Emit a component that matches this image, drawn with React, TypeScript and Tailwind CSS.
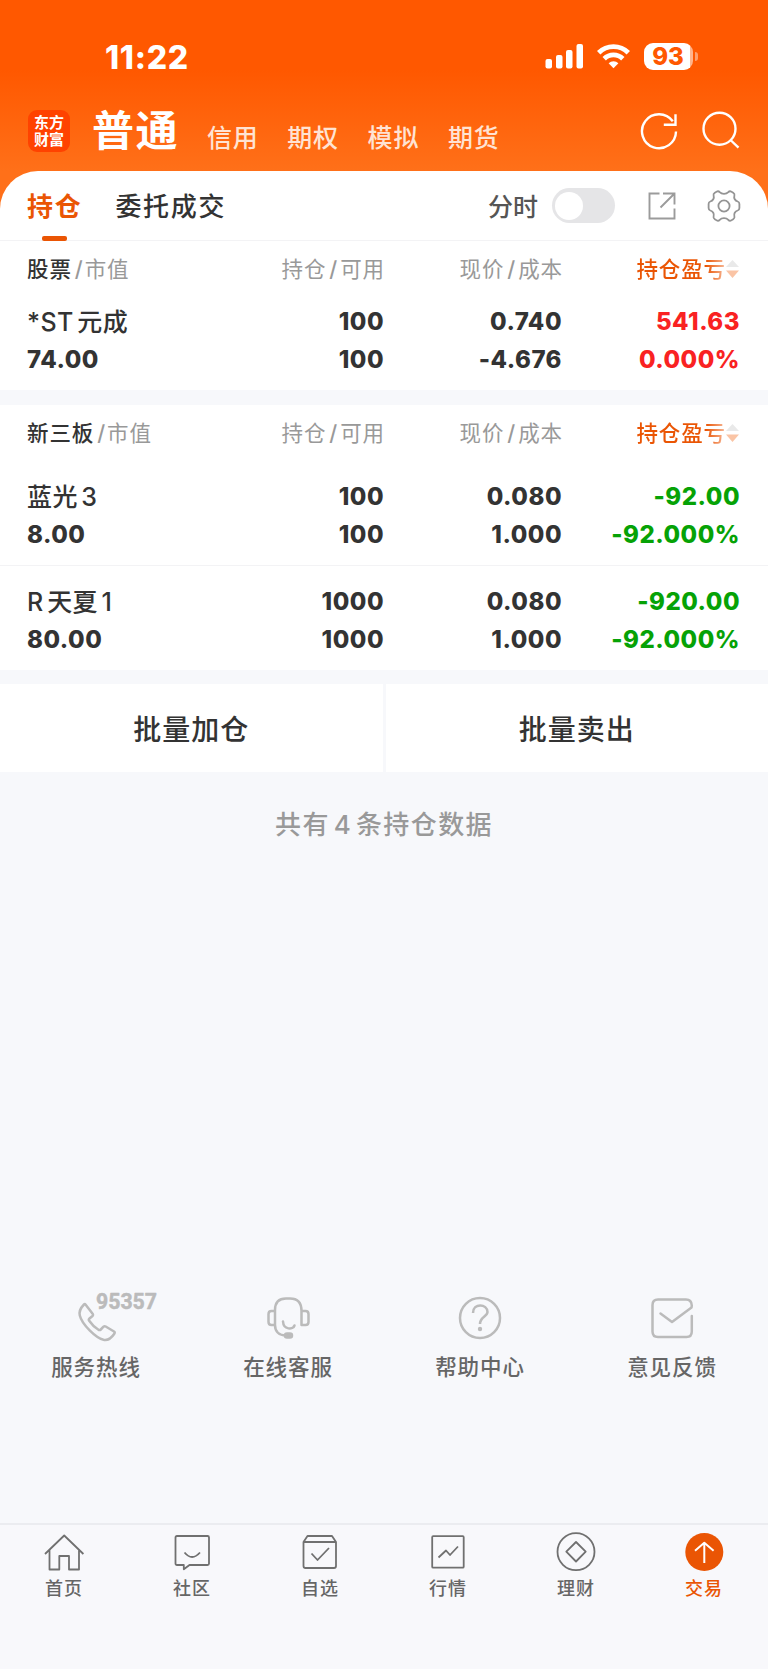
import type { ReactNode } from 'react';

type Holding = {
  name: string;
  value: string;
  amount: string;
  available: string;
  price: string;
  cost: string;
  profit: string;
  rate: string;
  up?: boolean;
};

const stocks: Holding[] = [
  { name: '*ST 元成', value: '74.00', amount: '100', available: '100', price: '0.740', cost: '-4.676', profit: '541.63', rate: '0.000%', up: true },
];

const otc: Holding[] = [
  { name: '蓝光 3', value: '8.00', amount: '100', available: '100', price: '0.080', cost: '1.000', profit: '-92.00', rate: '-92.000%' },
  { name: 'R 天夏 1', value: '80.00', amount: '1000', available: '1000', price: '0.080', cost: '1.000', profit: '-920.00', rate: '-92.000%' },
];

function StatusBar() {
  return (
    <div className="flex h-[92px] items-end justify-between pl-[105px] pr-[70px] text-white">
      <span className="h-[54px] text-[32px] font-extrabold leading-[39px] tracking-[0.7px]">11:22</span>
      <div className="flex h-[54px] items-start pt-[5px]">
        <svg width="40" height="28" viewBox="0 0 40 28" fill="white" className="mr-[11px]">
          <rect x="0.5" y="16" width="6.5" height="9.5" rx="2" />
          <rect x="11" y="12" width="6.5" height="13.5" rx="2" />
          <rect x="21" y="7" width="6.5" height="18.5" rx="2" />
          <rect x="31.5" y="1" width="6.5" height="24.5" rx="2" />
        </svg>
        <svg width="36" height="28" viewBox="0 0 36 28" className="mr-[12px]" fill="none" stroke="white" strokeWidth="4.8">
          <path d="M2.7 9.8a21 21 0 0 1 29.600 0" />
          <path d="M8.2 15.7a13.200 13.200 0 0 1 18.600 0" />
          <path d="M17.500 25.200l-4.900-5a7 7 0 0 1 9.800 0z" fill="white" stroke="none" />
        </svg>
        <div className="flex items-center">
          <div className="flex h-[27px] w-[49px] items-center justify-center rounded-[9px] bg-[linear-gradient(to_right,white_46px,#ffb48c_46px)] pr-[1px] text-[24px] font-extrabold leading-[27px] text-[#ff5800]">
            93
          </div>
          <div className="ml-[2px] h-[9px] w-[3px] rounded-r-full bg-[#ff9e6b]" />
        </div>
      </div>
    </div>
  );
}

function Header() {
  return (
    <div className="flex h-[79px] items-start px-[28px] text-white">
      <div className="mt-[18px] flex h-[42px] w-[42px] flex-col items-center justify-center rounded-[9px] bg-[#ff4200] text-[15px] font-bold leading-[17px]">
        <span>东方</span>
        <span>财富</span>
      </div>
      <span className="ml-[22px] mt-[8px] w-[115px] text-[42px] font-bold leading-[62px] tracking-[1.5px]">普通</span>
      {['信用', '期权', '模拟', '期货'].map((t) => (
        <span key={t} className="mt-[27px] w-[80.3px] text-[25px] font-medium leading-[38px] tracking-[0.8px] text-[#ffe3d3]">
          {t}
        </span>
      ))}
      <div className="ml-auto mt-[18px] flex gap-[22px]">
        <svg width="40" height="40" viewBox="0 0 40 40" fill="none" stroke="white" strokeWidth="2.4">
          <path d="M36 21.500A17 17 0 1 1 32.800 11.300M35.500 4.300V14.800H23.800" />
        </svg>
        <svg width="38" height="40" viewBox="0 0 38 40" fill="none" stroke="white" strokeWidth="2.4">
          <circle cx="17.5" cy="18.700" r="16" />
          <path d="M28.500 30L36.500 37.700" />
        </svg>
      </div>
    </div>
  );
}

function Tabs() {
  return (
    <div className="flex h-[70px] items-center border-b border-[#f3f3f5] pl-[27px] pr-[27px]">
      <div className="relative flex h-full items-center">
        <span className="pt-[2px] text-[26px] font-bold leading-[40px] tracking-[1.7px] text-[#ea5504]">持仓</span>
        <div className="absolute bottom-[-1px] left-[15px] h-[5px] w-[25px] rounded-[2px] bg-[#ea5504]" />
      </div>
      <span className="ml-[33px] pt-[2px] text-[26px] font-medium leading-[40px] tracking-[1.7px] text-[#333]">委托成交</span>
      <span className="ml-auto pt-[2px] text-[25px] font-medium leading-[40px] text-[#555]">分时</span>
      <div className="ml-[14px] flex h-[35px] w-[63px] items-center rounded-full bg-[#e5e5e7] px-[3px]">
        <div className="h-[28px] w-[28px] rounded-full bg-white" />
      </div>
      <svg width="28" height="28" viewBox="0 0 28 28" className="ml-[33px]" fill="none" stroke="#9b9b9b" strokeWidth="1.9">
        <path d="M11.500 1.500H1.500V26.500H26.500V16.500M15 1.500H26.500V12.500M26 2L12.500 15.500" />
      </svg>
      <svg width="34" height="34" viewBox="0 0 34 34" className="ml-[31px]" fill="none" stroke="#949494" strokeWidth="1.8" strokeLinejoin="round">
        <circle cx="17" cy="17" r="5.6" />
        <path d="M12.700 3.200C13.700 4.300 15 4.900 17 4.900S20.300 4.300 21.300 3.200C22.300 2 23.200 2 24.500 2.700L26.200 3.700C27.500 4.500 27.800 5.300 27.400 6.600C26.600 9.300 28 11.800 30.700 12.500C32 12.900 32.400 13.600 32.400 15V19C32.400 20.400 32 21.100 30.700 21.500C28 22.200 26.600 24.700 27.400 27.400C27.800 28.700 27.500 29.500 26.200 30.300L24.500 31.300C23.200 32 22.300 32 21.300 30.800C20.300 29.700 19 29.100 17 29.100S13.700 29.700 12.700 30.800C11.700 32 10.800 32 9.500 31.300L7.800 30.300C6.500 29.500 6.200 28.700 6.600 27.400C7.400 24.700 6 22.200 3.300 21.500C2 21.100 1.600 20.400 1.600 19V15C1.600 13.600 2 12.900 3.300 12.500C6 11.800 7.400 9.300 6.600 6.600C6.200 5.300 6.500 4.500 7.800 3.700L9.500 2.700C10.800 2 11.700 2 12.700 3.200Z" />
      </svg>
    </div>
  );
}

function ColumnHeader({ title }: { title: string }) {
  return (
    <div className="grid h-[58px] grid-cols-[206px_150px_178px_178px] items-center px-[27px] pb-[2px] text-[21.5px] leading-[32px] tracking-[0.9px] text-[#999]">
      <div className="whitespace-nowrap">
        <span className="font-medium text-[#333]">{title}</span>
        <span className="ml-[3px] mr-[1px] font-medium">/</span>市值
      </div>
      <div className="-mr-[2px] text-right">
        持仓<span className="ml-[3px] mr-[2px] font-medium">/</span>可用
      </div>
      <div className="-mr-[2px] text-right">
        现价<span className="ml-[3px] mr-[2px] font-medium">/</span>成本
      </div>
      <div className="flex items-center justify-end font-medium">
        <span className="bg-[linear-gradient(to_right,#ea5504_70px,#f7bd9f)] bg-clip-text text-transparent">持仓盈亏</span>
        <svg width="13" height="18" viewBox="0 0 13 18">
          <path d="M6.500 0L13 7H0Z" fill="#e9e9e9" />
          <path d="M0 10.500H13L6.500 18Z" fill="#fac4a5" />
        </svg>
      </div>
    </div>
  );
}

function HoldingRow({ item, className }: { item: Holding; className: string }) {
  const color = item.up ? 'text-[#f92222]' : 'text-[#06a206]';
  return (
    <div className={`grid grid-cols-[206px_150px_178px_178px] px-[27px] pb-[11px] text-[24px] font-extrabold leading-[38px] tracking-[0.5px] text-[#333] ${className}`}>
      <div>
        <div className="whitespace-nowrap text-[25px] font-medium tracking-[0.4px] [word-spacing:-3.5px]">{item.name}</div>
        <div>{item.value}</div>
      </div>
      <div className="-mr-[1px] text-right">
        <div>{item.amount}</div>
        <div>{item.available}</div>
      </div>
      <div className="-mr-[1px] text-right">
        <div>{item.price}</div>
        <div>{item.cost}</div>
      </div>
      <div className={`-mr-[1px] text-right ${color}`}>
        <div>{item.profit}</div>
        <div>{item.rate}</div>
      </div>
    </div>
  );
}

function Service({ label, children }: { label: string; children: ReactNode }) {
  return (
    <div className="flex flex-1 flex-col items-center">
      <svg width="192" height="60" viewBox="0 0 192 60" fill="none" stroke="#bbb" strokeWidth="2.5" strokeLinecap="round" strokeLinejoin="round">
        {children}
      </svg>
      <span className="mt-[3px] text-[21.5px] font-medium leading-[32px] tracking-[0.9px] text-[#666]">{label}</span>
    </div>
  );
}

function Services() {
  return (
    <div className="mt-[412px] flex h-[235px]">
      <Service label="服务热线">
        <path d="M85.500 16.500L92.800 26Q93.500 27 92.500 28L89.500 30.500Q88.300 31.600 89.200 32.800Q93 38.500 98.500 41.800Q99.800 42.500 100.800 41.500L103.500 38.700Q104.500 37.800 105.700 38.500L114 43.500Q115.200 44.400 114.300 45.700Q109.500 53 103.500 51.800C96 50 82 36.500 79.800 27.500Q78.500 22 84 16.500Q84.800 15.700 85.500 16.500Z" />
        <text x="96" y="21" fill="#bbb" stroke="#bbb" strokeWidth="0.5" fontFamily="Roboto" fontSize="22.5" fontWeight="700" textLength="61" lengthAdjust="spacingAndGlyphs">
          95357
        </text>
      </Service>
      <Service label="在线客服">
        <path d="M109.500 37V23Q109.500 10.500 98 10.500H94Q83 10.500 83 22V37C83 43.500 87 47.500 94 47.500M83 23H79.500Q76.500 23 76.500 26V34Q76.500 37 79.500 37H83M109.500 23H113.500Q116.500 23 116.500 26V34Q116.500 37 113.500 37H109.500M91 33.500C91.500 42 101 42 102.500 37.500" />
        <rect x="93" y="45.500" width="7" height="4" rx="2" fill="#bbb" />
      </Service>
      <Service label="帮助中心">
        <circle cx="96" cy="30" r="20" />
        <path d="M89 25C89 14.500 103.500 15.500 103.500 24C103.500 28.500 96 29 96 36" strokeLinecap="butt" />
        <circle cx="96" cy="41" r="2.2" fill="#bbb" stroke="none" />
      </Service>
      <Service label="意见反馈">
        <path d="M115.800 28V43.500Q115.800 49 110.500 49H82Q76.500 49 76.500 43.500V17Q76.500 11.500 82 11.500H110Q115.500 11.500 115.800 17.500L115.500 19.500L96 34L84.500 25.500" />
      </Service>
    </div>
  );
}

function NavItem({ label, active, children }: { label: string; active?: boolean; children: ReactNode }) {
  return (
    <div className="flex w-32 flex-col items-center">
      <svg width="44" height="44" viewBox="0 0 44 44" className="mt-[6px]" fill="none" stroke="#707070" strokeWidth="1.8" strokeLinejoin="round">
        {children}
      </svg>
      <span className={`text-[18px] font-medium leading-[28px] tracking-[1px] ${active ? 'text-[#ea5504]' : 'text-[#666]'}`}>{label}</span>
    </div>
  );
}

function BottomNav() {
  return (
    <div className="flex h-[146px] border-t-2 border-[#ebecf0] bg-[#f8f8fb]">
      <NavItem label="首页">
        <path d="M3 23L22.200 4.500L41.400 23M7.500 19V38.500H17.300V25H27V38.500H37V19" />
      </NavItem>
      <NavItem label="社区">
        <path d="M7 5H37.500Q39 5 39 6.500V32.500Q39 34 37.500 34H19.500L13.800 38.300V34H7Q5.500 34 5.500 32.500V6.500Q5.500 5 7 5ZM14.500 21.500Q22 30.500 30 21.500" />
      </NavItem>
      <NavItem label="自选">
        <path d="M5.500 11L9.500 5H34L38 11V35Q38 37 36 37H7.500Q5.500 37 5.500 35ZM5.500 11H38M13.500 22.500L19.500 29L31 17" />
      </NavItem>
      <NavItem label="行情">
        <rect x="6.2" y="5.2" width="31.5" height="31.5" rx="1" />
        <path d="M12.500 26.500L20 19.500L24 24L32 15.500" />
      </NavItem>
      <NavItem label="理财">
        <circle cx="22" cy="20.7" r="18.5" />
        <path d="M22 11L31.700 20.700L22 30.500L12.300 20.700Z" />
      </NavItem>
      <NavItem label="交易" active>
        <circle cx="22.3" cy="21" r="19" fill="#ea5504" stroke="none" />
        <path d="M22.300 32V12M13 19.800L22.300 11.800L31.600 19.800" stroke="white" strokeWidth="2" />
      </NavItem>
    </div>
  );
}

export default function App() {
  return (
    <div className="flex h-[1669px] w-[768px] flex-col overflow-hidden bg-[#f7f8fb] font-['Inter','Noto_Sans_CJK_SC',sans-serif]">
      <div className="bg-[linear-gradient(to_bottom,#ff5800_70px,#ff7019_171px)]">
        <StatusBar />
        <Header />
        <div className="rounded-t-[38px] bg-white">
          <Tabs />
          <ColumnHeader title="股票" />
          {stocks.map((s) => (
            <HoldingRow key={s.name} item={s} className="pt-[4px]" />
          ))}
        </div>
      </div>
      <div className="mt-[15px] bg-white">
        <ColumnHeader title="新三板" />
        <HoldingRow item={otc[0]} className="border-b border-[#f3f3f5] pt-[15px]" />
        <HoldingRow item={otc[1]} className="pt-[17px]" />
      </div>
      <div className="mt-[14px] flex h-[88px] gap-[3px] text-[28px] font-medium tracking-[1px] text-[#333]">
        <button className="flex-1 bg-white pt-[3px]">批量加仓</button>
        <button className="flex-1 bg-white pt-[3px]">批量卖出</button>
      </div>
      <div className="h-[104px] text-center text-[26px] font-medium leading-[106px] tracking-[1.4px] text-[#999] [word-spacing:-4.5px]">共有 4 条持仓数据</div>
      <Services />
      <BottomNav />
    </div>
  );
}
